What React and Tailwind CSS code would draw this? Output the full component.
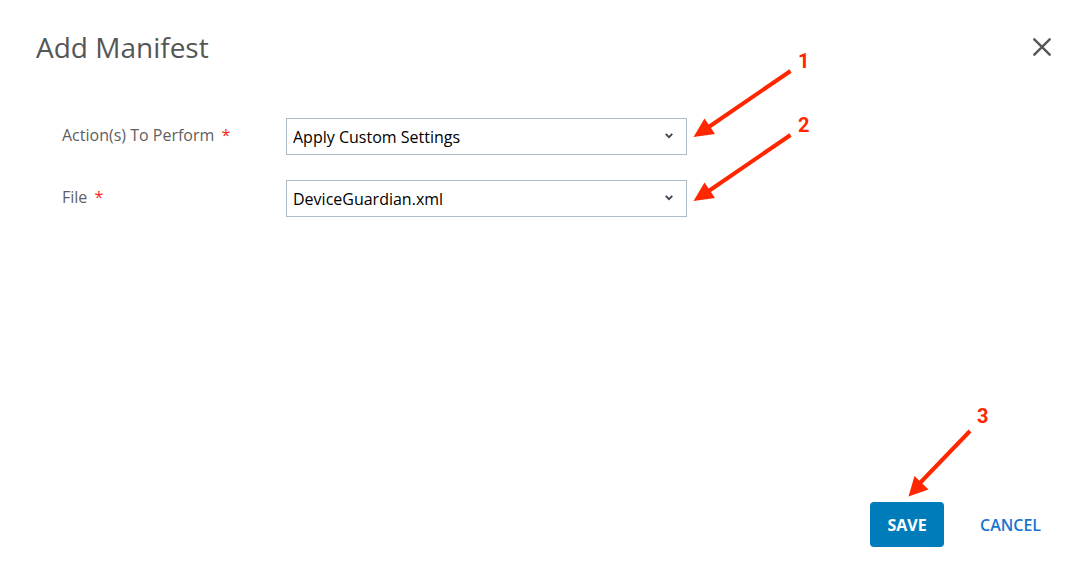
import { useId } from "react";

function Arrow() {
  return (
    <svg width="100" height="70" viewBox="0 0 100 70" className="block" aria-hidden="true">
      <path d="M97.500 2 15 58.500" stroke="#ff2600" strokeWidth="4" fill="none" />
      <path d="M.5 68 11.500 49.500 22 65Z" fill="#ff2600" />
    </svg>
  );
}

function SteepArrow() {
  return (
    <svg width="64" height="68" viewBox="0 0 64 68" className="block" aria-hidden="true">
      <path d="M62 2 10 56" stroke="#ff2600" strokeWidth="4" fill="none" />
      <path d="M.5 67.500 6.500 47 20.500 60.500Z" fill="#ff2600" />
    </svg>
  );
}

function StepNumber({ children }) {
  return (
    <span className="font-['Roboto','Liberation_Sans',sans-serif] text-xl leading-5 font-bold text-[#ff2600]">
      {children}
    </span>
  );
}

function SelectField({ label, options }) {
  const id = useId();
  return (
    <div className="flex items-center">
      <label htmlFor={id} className="w-56 shrink-0 pb-1 text-base text-[#5f5f5f]">
        {label} <span className="ml-[3px] text-[#ff1a1a]">*</span>
      </label>
      <div className="relative min-w-0 flex-1">
        <select
          id={id}
          required
          className="block h-[37px] w-full appearance-none border border-[#adbbc7] bg-white pr-8 pl-1.5 text-base text-black"
        >
          {options.map((option) => (
            <option key={option}>{option}</option>
          ))}
        </select>
        <svg
          viewBox="0 0 8 6"
          className="pointer-events-none absolute top-[15px] right-3.5 h-1.5 w-2"
          fill="none"
          stroke="#40444f"
          strokeWidth="1.8"
          aria-hidden="true"
        >
          <path d="M.7.8 4 4.200 7.300.8" />
        </svg>
      </div>
    </div>
  );
}

export default function App() {
  return (
    <section
      aria-labelledby="dialog-title"
      className="flex min-h-screen flex-col bg-white px-6 pt-[27px] pb-6 font-['Open_Sans','Noto_Sans',sans-serif]"
    >
      <header className="flex items-center justify-between pl-3">
        <h1 id="dialog-title" className="text-[28px] leading-10 text-[#565656]">
          Add Manifest
        </h1>
        <button type="button" aria-label="Close" className="p-0.5">
          <svg width="18" height="18" viewBox="0 0 18 18" stroke="#565656" strokeWidth="2.4" strokeLinecap="round" aria-hidden="true">
            <path d="m1.300 1.300 15.400 15.400M16.700 1.300 1.300 16.700" />
          </svg>
        </button>
      </header>

      <form className="flex flex-1 flex-col">
        <div className="relative mt-[51px] mr-[100px] ml-[38px] flex max-w-[625px] flex-col gap-[25px]">
          <SelectField label="Action(s) To Perform" options={["Apply Custom Settings"]} />
          <SelectField label="File" options={["DeviceGuardian.xml"]} />
          <ol className="pointer-events-none absolute -top-[67px] left-full ml-1.5 flex flex-col">
            <li className="flex h-16 items-start gap-[5px]">
              <div className="pt-[18px]">
                <Arrow />
              </div>
              <StepNumber>1</StepNumber>
            </li>
            <li className="flex h-16 items-start gap-[5px]">
              <div className="pt-[18px]">
                <Arrow />
              </div>
              <StepNumber>2</StepNumber>
            </li>
          </ol>
        </div>

        <footer className="mt-auto flex justify-end gap-6">
          <div className="relative">
            <button
              type="submit"
              className="h-[45px] w-[74px] rounded bg-[#007cbb] text-base font-bold text-white"
            >
              SAVE
            </button>
            <div className="pointer-events-none absolute bottom-full left-[38px] mb-[5px] flex items-start gap-[5px]">
              <div className="pt-[23px]">
                <SteepArrow />
              </div>
              <StepNumber>3</StepNumber>
            </div>
          </div>
          <button type="button" className="h-[45px] w-[85px] text-base font-semibold text-[#1a73d0]">
            CANCEL
          </button>
        </footer>
      </form>
    </section>
  );
}
